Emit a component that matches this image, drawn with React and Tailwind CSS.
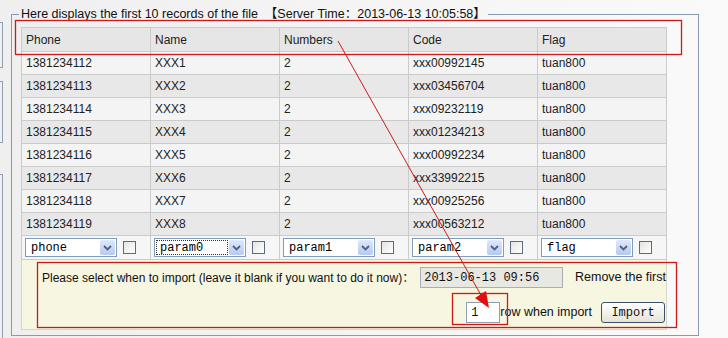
import React from "react";

const rows = [
  ["1381234112", "XXX1", "2", "xxx00992145", "tuan800"],
  ["1381234113", "XXX2", "2", "xxx03456704", "tuan800"],
  ["1381234114", "XXX3", "2", "xxx09232119", "tuan800"],
  ["1381234115", "XXX4", "2", "xxx01234213", "tuan800"],
  ["1381234116", "XXX5", "2", "xxx00992234", "tuan800"],
  ["1381234117", "XXX6", "2", "xxx33992215", "tuan800"],
  ["1381234118", "XXX7", "2", "xxx00925256", "tuan800"],
  ["1381234119", "XXX8", "2", "xxx00563212", "tuan800"],
];

const headers = ["Phone", "Name", "Numbers", "Code", "Flag"];
const params = ["phone", "param0", "param1", "param2", "flag"];

const mono = "font-['Liberation_Mono','DejaVu_Sans_Mono',monospace]";

const FakeSelect = ({ value, focused }) => (
  <div className="flex items-center gap-[6px]">
    <div className="flex h-[19px] w-[92px] items-center border border-[#7f9db9] bg-white pl-[1px] pr-[1px]">
      <div
        className={`flex h-[15px] flex-1 items-center pl-[3px] text-[12px] text-black ${mono} ${
          focused ? "border border-dotted border-[#333]" : "border border-transparent"
        }`}
      >
        {value}
      </div>
      <div className="ml-[1px] flex h-[15px] w-[15px] items-center justify-center rounded-[2px] bg-gradient-to-b from-[#dfe8fb] to-[#b7c9f0]">
        <svg width="9" height="6" viewBox="0 0 9 6">
          <path d="M1 1l3.5 3.5L8 1" fill="none" stroke="#4d6185" strokeWidth="1.8" />
        </svg>
      </div>
    </div>
    <div className="h-[13px] w-[13px] border border-[#5b6b82] bg-gradient-to-br from-[#e4e4e0] to-white" />
  </div>
);

export default function App() {
  return (
    <div className="relative flex h-[338px] w-[728px] overflow-hidden bg-gradient-to-r from-[#efefef] to-[#fafafa] font-['Liberation_Sans','Noto_Sans_CJK_SC',sans-serif] text-[12px] text-[#111]">
      {/* edges of the panels to the left */}
      <div className="flex w-[3px] shrink-0 flex-col">
        <div className="mt-[22px] h-[47px] border-y border-r border-[#8fa0b4]" />
        <div className="mt-[13px] h-[64px] border-y border-r border-[#8fa0b4]" />
        <div className="mt-[31px] h-[170px] border-t border-r border-[#8fa0b4]" />
      </div>

      <fieldset className="ml-[8px] mt-[7px] h-[329px] w-[688px] border border-[#8a9bb0] pl-[9px] pt-[6px]">
        <legend className="ml-[-2px] px-[2px] leading-[14px] text-[12.5px]">
          Here displays the first 10 records of the file&nbsp;&nbsp;【Server Time：2013-06-13 10:05:58】
        </legend>

        <table className="w-[645px] table-fixed border-collapse text-[12px]">
          <thead>
            <tr className="h-[24px] bg-[#e6e6e6]">
              {headers.map((h) => (
                <th key={h} className="w-[129px] border border-[#cbcbcb] pl-[4px] text-left font-normal text-[#222]">
                  {h}
                </th>
              ))}
            </tr>
          </thead>
          <tbody>
            {rows.map((r, i) => (
              <tr key={r[0]} className={`h-[23px] ${i % 2 === 0 ? "bg-[#f4f4f4]" : "bg-[#e8e8e8]"}`}>
                {r.map((c, j) => (
                  <td key={j} className="border border-[#cbcbcb] pl-[4px] text-[#222]">
                    {c}
                  </td>
                ))}
              </tr>
            ))}
            <tr className="h-[24px] bg-[#f6f6f6]">
              {params.map((p) => (
                <td key={p} className="border border-[#cbcbcb] pl-[3px]">
                  <FakeSelect value={p} focused={p === "param0"} />
                </td>
              ))}
            </tr>
            <tr className="bg-[#f7f6e1]">
              <td colSpan={5} className="h-[70px] border border-[#d6d6c8] p-0 align-top">
                <div className="flex flex-col pl-[20px] pr-0 pt-[7px]">
                  <div className="flex h-[21px] items-center whitespace-nowrap">
                    <span>Please select when to import (leave it blank if you want to do it now)：</span>
                    <div className={`ml-[6px] flex h-[21px] w-[146px] items-center border border-[#a9afb5] bg-[#e8e8e2] pl-[3px] text-[12px] ${mono}`}>
                      2013-06-13 09:56
                    </div>
                    <span className="ml-[12px] text-[12.5px]">Remove the first</span>
                  </div>
                  <div className="mt-[14px] flex h-[21px] items-center justify-end pr-[1px]">
                    <div className={`flex h-[21px] w-[34px] items-center border border-[#8c9fb0] bg-white pl-[4px] text-[12px] ${mono}`}>
                      1
                    </div>
                    <span className="text-[12.5px]">row when import</span>
                    <button className={`ml-[9px] h-[21px] w-[64px] rounded-[3px] border border-[#3d4f6c] bg-gradient-to-b from-white to-[#e6e3d6] text-[12px] ${mono}`}>
                      Import
                    </button>
                  </div>
                </div>
              </td>
            </tr>
          </tbody>
        </table>
      </fieldset>

      {/* red annotations drawn over the screenshot */}
      <svg className="pointer-events-none absolute inset-0" width="728" height="338" viewBox="0 0 728 338">
        <rect x="15.5" y="20.5" width="666" height="34" fill="none" stroke="#cc1a1a" strokeWidth="1.3" />
        <rect x="37.5" y="262.5" width="639" height="65" fill="none" stroke="#cc1a1a" strokeWidth="1.3" />
        <rect x="452.5" y="293.5" width="55" height="31" fill="none" stroke="#cc1a1a" strokeWidth="1.3" />
        <line x1="338" y1="41" x2="482" y2="297" stroke="#d01818" strokeWidth="1" />
        <polygon points="489,308 475,298 486,291" fill="#e01010" />
      </svg>
    </div>
  );
}
